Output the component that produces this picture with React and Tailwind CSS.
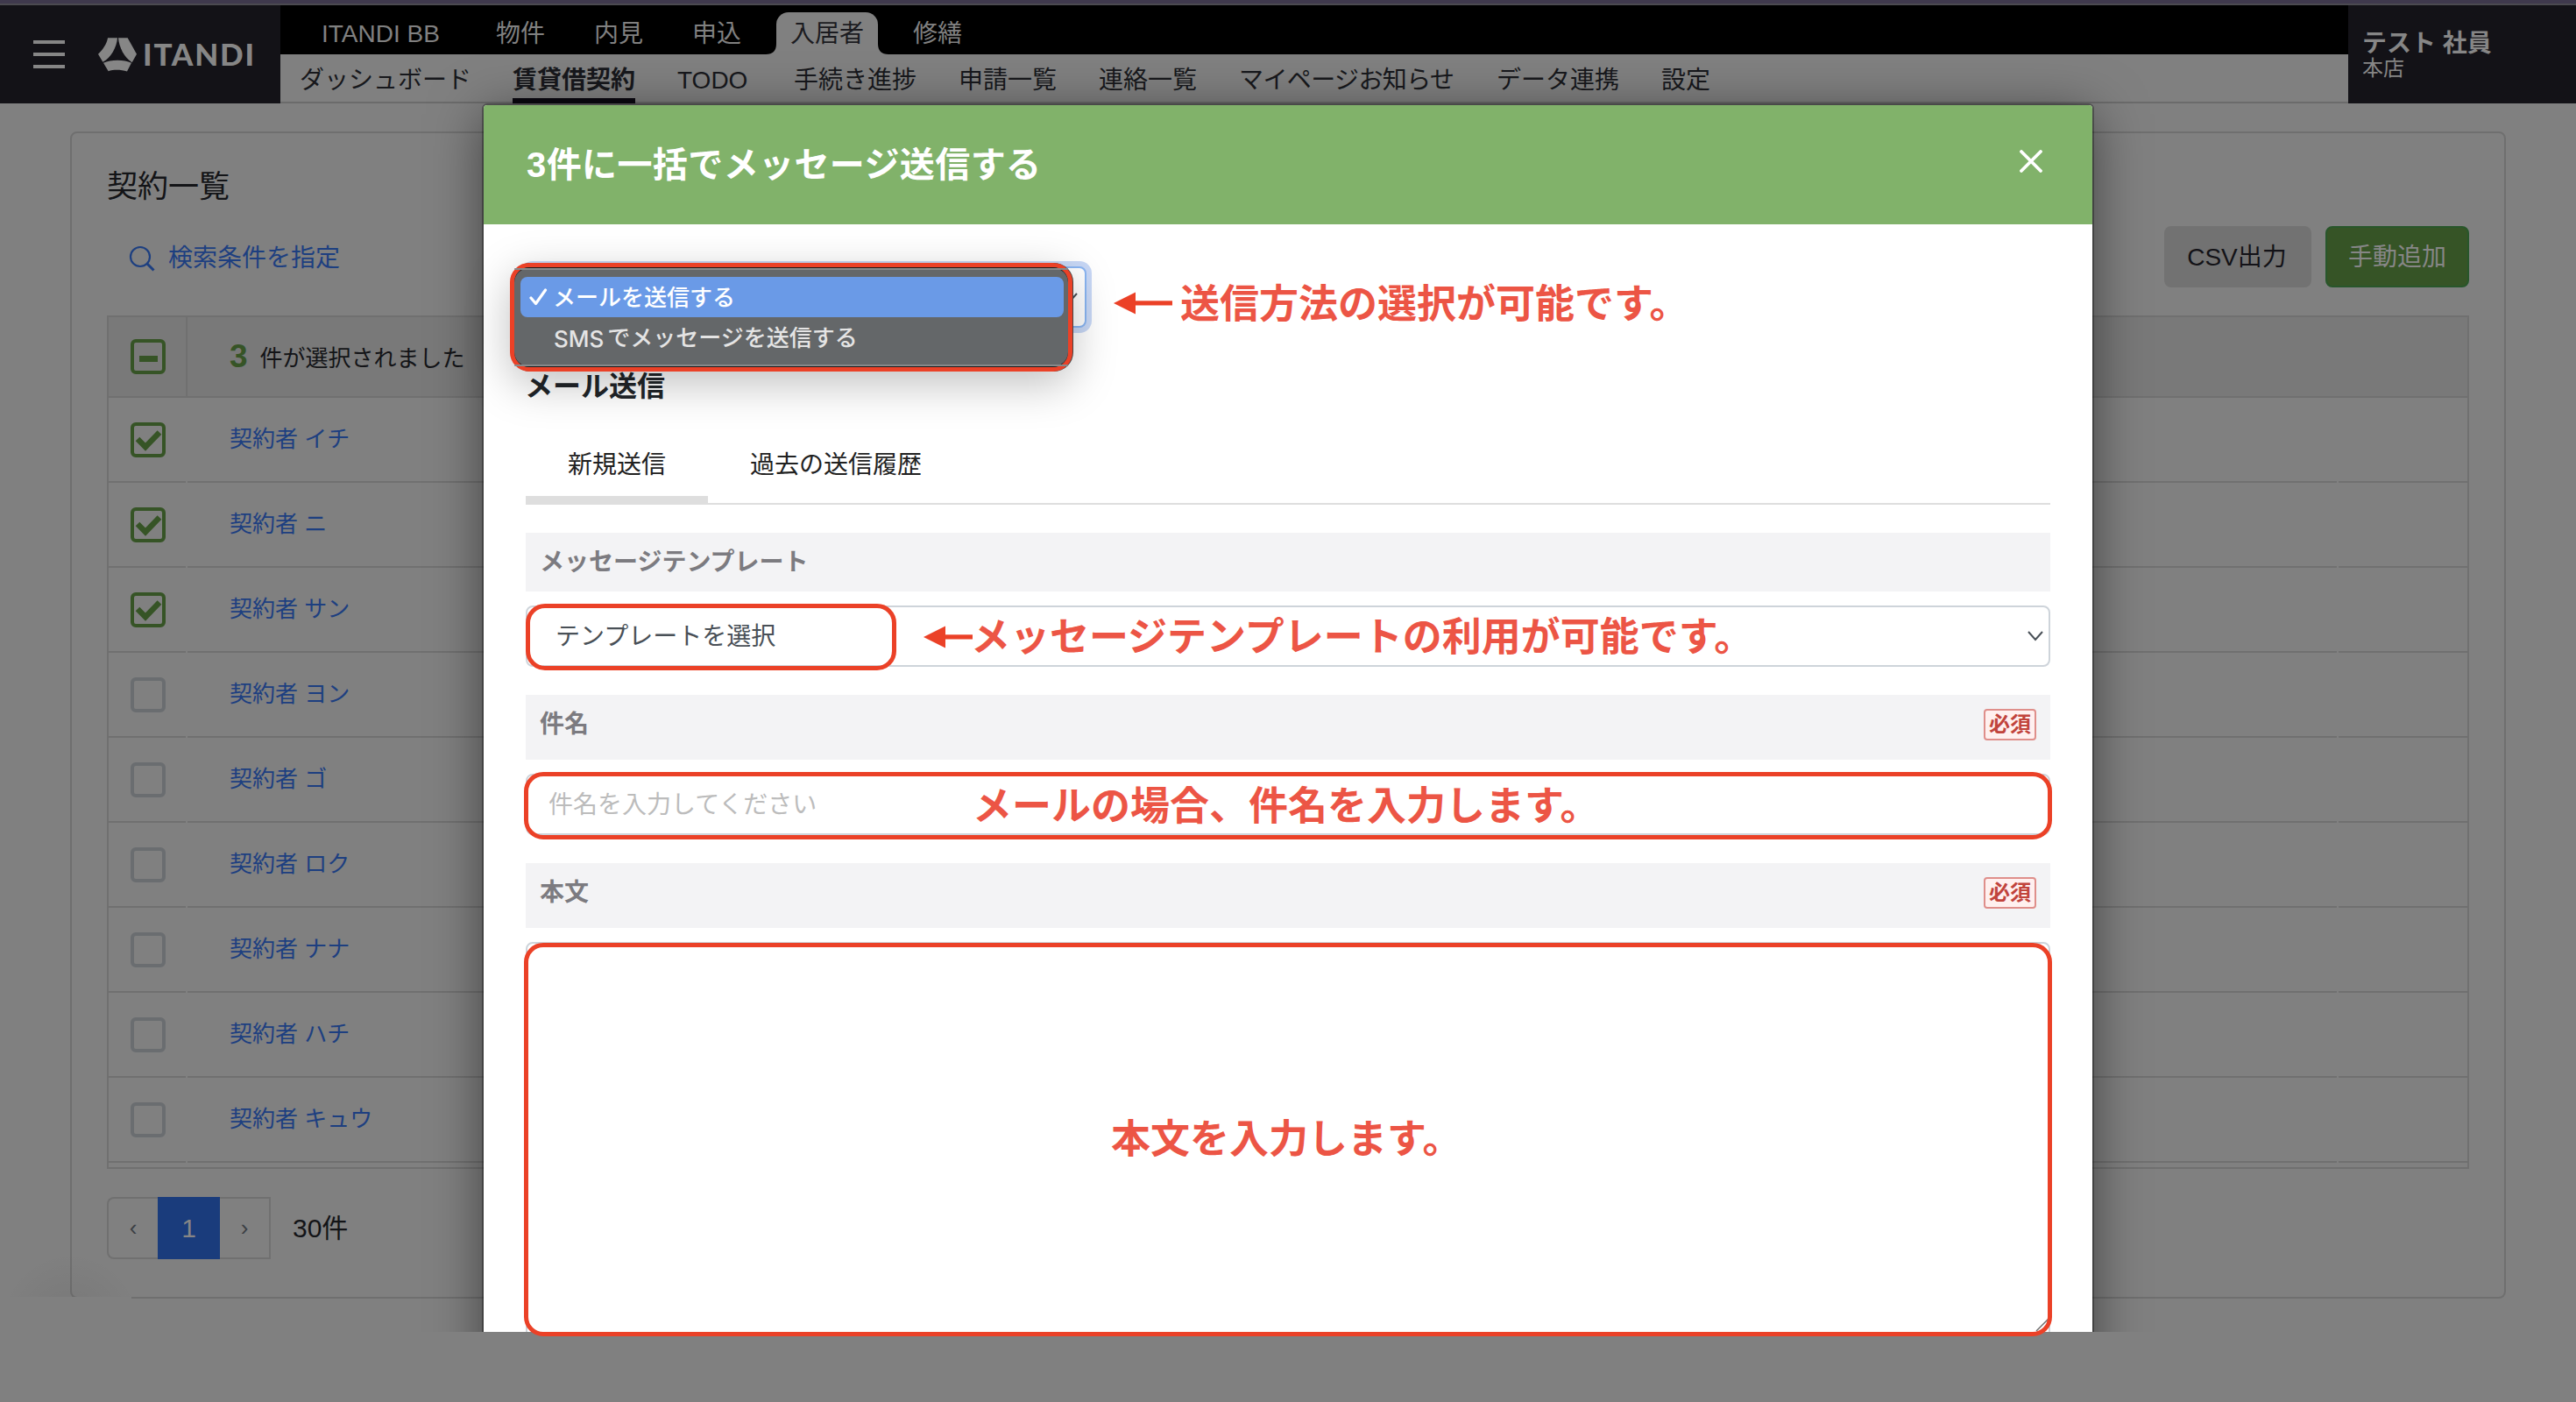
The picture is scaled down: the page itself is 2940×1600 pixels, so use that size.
import React from "react";

const SANS = "font-['Liberation_Sans','Noto_Sans_CJK_JP',sans-serif]";

const services = [
  { label: "ITANDI BB", width: "w-[144px] pl-px" },
  { label: "物件", width: "w-14" },
  { label: "内見", width: "w-14" },
  { label: "申込", width: "w-14" },
  { label: "入居者", width: "w-[84px]", active: true },
  { label: "修繕", width: "w-14" },
];

const sections = [
  { label: "ダッシュボード", width: "w-[196px]" },
  { label: "賃貸借契約", width: "w-[140px] -ml-px mr-px", active: true },
  { label: "TODO", width: "w-[84px] -ml-px mr-px" },
  { label: "手続き進捗", width: "w-[140px]" },
  { label: "申請一覧", width: "w-[112px]" },
  { label: "連絡一覧", width: "w-[112px]" },
  { label: "マイページお知らせ", width: "w-[246px] tracking-[-0.6px]" },
  { label: "データ連携", width: "w-[140px]" },
  { label: "設定", width: "w-14" },
];

const contracts = [
  { name: "契約者 イチ", checked: true },
  { name: "契約者 ニ", checked: true },
  { name: "契約者 サン", checked: true },
  { name: "契約者 ヨン", checked: false },
  { name: "契約者 ゴ", checked: false },
  { name: "契約者 ロク", checked: false },
  { name: "契約者 ナナ", checked: false },
  { name: "契約者 ハチ", checked: false },
  { name: "契約者 キュウ", checked: false },
];

function Logo() {
  return (
    <svg className="h-14 w-[196px] overflow-visible" viewBox="0 -8 196 56" fill="#868686">
      <g transform="translate(0 -0.5) scale(0.33333) translate(-336 -126)">
        <path d="M369 128H402C400 160 380 196 352 211L336 184C352 168 366 148 369 128Z" />
        <path d="M405 128H437L468 184L452 212C425 195 408 160 405 128Z" />
        <path d="M354 214C380 202 425 202 450 214L435 243C415 237 390 236 371 242Z" />
      </g>
      <text
        x="51"
        y="32"
        textLength="127"
        lengthAdjust="spacing"
        className="font-['Lato',sans-serif] text-[35px] font-black"
      >
        ITANDI
      </text>
    </svg>
  );
}

function Header() {
  return (
    <header className="flex h-28 w-full">
      <div className="flex w-80 items-center bg-[#131217]">
        <div className="ml-[38px] flex w-9 shrink-0 flex-col gap-2.5">
          <div className="h-1 bg-[#868686]" />
          <div className="h-1 bg-[#868686]" />
          <div className="h-1 bg-[#868686]" />
        </div>
        <div className="ml-[38px] mt-0.5 shrink-0">
          <Logo />
        </div>
      </div>
      <div className="flex w-[2360px] flex-col">
        <nav className="flex h-14 items-end gap-14 bg-black pl-[46px] text-[28px] text-[#808080]">
          {services.map((s) =>
            s.active ? (
              <div
                key={s.label}
                className={`relative -mx-4 flex h-12 box-content items-center justify-center rounded-t-[14px] bg-[#808080] px-4 text-[#1b1b20] ${s.width}`}
              >
                <span className="mt-0.5 whitespace-nowrap">{s.label}</span>
                <svg className="absolute bottom-0 -left-3 size-3" viewBox="0 0 12 12" fill="#808080">
                  <path d="M12 0V12H0C8 12 12 8 12 0Z" />
                </svg>
                <svg className="absolute bottom-0 -right-3 size-3" viewBox="0 0 12 12" fill="#808080">
                  <path d="M0 0V12H12C4 12 0 8 0 0Z" />
                </svg>
              </div>
            ) : (
              <div key={s.label} className={`flex h-12 items-center ${s.width}`}>
                <span className="mt-0.5 whitespace-nowrap">{s.label}</span>
              </div>
            )
          )}
        </nav>
        <nav className="flex h-14 gap-12 border-b-2 border-[#6b6b6b] bg-[#808080] pl-[22px] text-[28px] text-[#17181c]">
          {sections.map((s) => (
            <div key={s.label} className={`relative flex h-14 items-center whitespace-nowrap ${s.width}`}>
              <span className={s.active ? "mt-[3px] font-bold" : "mt-[3px]"}>{s.label}</span>
              {s.active && <div className="absolute inset-x-0 bottom-0 h-1.5 bg-[#0a0810]" />}
            </div>
          ))}
        </nav>
      </div>
      <div className="flex flex-1 flex-col bg-[#131217] pl-4 pt-[27px] text-[#868686]">
        <div className="text-[28px] font-bold leading-[34px]">テスト 社員</div>
        <div className="-mt-px text-2xl leading-6">本店</div>
      </div>
    </header>
  );
}

function Checkbox({ state }) {
  return (
    <div
      className={`flex size-10 items-center justify-center rounded-md border-4 ${
        state === "off" ? "border-[#6a6d70]" : "border-[#365426]"
      }`}
    >
      {state === "on" && (
        <svg className="size-8 shrink-0" viewBox="0 0 32 32" fill="none" stroke="#365426" strokeWidth="6.5">
          <path d="M4 15L13 24L29 7.5" />
        </svg>
      )}
      {state === "mixed" && <div className="mt-1 h-[7px] w-[21px] bg-[#365426]" />}
    </div>
  );
}

function ContractList() {
  return (
    <main className="ml-20 mt-8 h-[1332px] w-[2780px] rounded-lg border-2 border-[#6f6f6f] px-10 pt-9">
      <h1 className="h-[50px] text-[35px] leading-[50px] text-[#131417]">契約一覧</h1>
      <div className="mt-5 flex h-[70px] items-center">
        <svg className="ml-[25px] mt-1 size-[30px]" viewBox="0 0 30 30" fill="none" stroke="#1d3f80" strokeWidth="2.2">
          <circle cx="13" cy="13" r="11" />
          <path d="M21 21L28.5 28.5" strokeWidth="3" />
        </svg>
        <span className="ml-[15px] mt-[3px] text-[28px] text-[#1d3f80]">検索条件を指定</span>
        <div className="ml-auto flex h-[70px] gap-4">
          <div className="flex w-[168px] items-center justify-center rounded-lg bg-[#727272] pr-0.5 pt-0.5 text-[28px] text-[#131217]">
            CSV出力
          </div>
          <div className="flex w-[164px] items-center justify-center rounded-lg border-2 border-[#28562b] bg-[#365426] pt-0.5 text-[28px] text-[#868686]">
            手動追加
          </div>
        </div>
      </div>
      <div className="mt-8 h-[974px] w-[2696px] border-2 border-[#707070]">
        <div className="flex h-[92px] border-b-2 border-[#707070] bg-[#797979]">
          <div className="flex w-[90px] items-center border-r-2 border-[#707070] pl-[25px]">
            <Checkbox state="mixed" />
          </div>
          <div className="flex items-center pl-12 text-[26px] text-[#131417]">
            <span className="mr-3.5 text-[37px] font-bold text-[#365426]">3</span>
            <span className="mt-1">件が選択されました</span>
          </div>
        </div>
        {contracts.map((c) => (
          <div key={c.name} className="flex h-[97px] gap-0.5">
            <div className="flex w-[88px] items-center border-b-2 border-[#707070] pl-[25px]">
              <Checkbox state={c.checked ? "on" : "off"} />
            </div>
            <div className="flex w-[2453px] items-center border-b-2 border-[#707070] pl-12 text-[26px] text-[#1d3f80]">
              {c.name}
            </div>
            <div className="flex-1 border-b-2 border-[#707070]" />
          </div>
        ))}
      </div>
      <div className="mt-8 flex h-[71px] items-center">
        <div className="flex h-full w-[58px] items-center justify-center rounded-l-lg border-2 border-r-0 border-[#707070] text-[26px] text-[#3b3f44]">
          ‹
        </div>
        <div className="flex h-full w-[71px] items-center justify-center bg-[#1a3c7c] text-[30px] text-[#868686]">1</div>
        <div className="flex h-full w-[58px] items-center justify-center border-2 border-l-0 border-[#707070] text-[26px] text-[#3b3f44]">
          ›
        </div>
        <span className="ml-[25px] text-[30px] text-[#131417]">30件</span>
      </div>
    </main>
  );
}

function Arrow({ className, length }) {
  return (
    <svg className={`absolute h-[26px] w-[68px] ${className}`} viewBox="0 0 68 26" fill="#eb4127">
      <path d="M0 13L25 0.5V25.5Z" />
      <rect x="24" y="10.3" width={length - 24} height="5.2" />
    </svg>
  );
}

function Note({ className, children }) {
  return (
    <div
      className={`absolute h-[60px] whitespace-nowrap font-['Noto_Sans_CJK_JP',sans-serif] text-[45px] font-bold leading-[60px] text-[#ec5545] ${className}`}
    >
      {children}
    </div>
  );
}

function FieldLabel({ className, required, children }) {
  return (
    <div className={`flex items-center justify-between bg-[#f3f3f5] pl-4 pr-4 ${className}`}>
      <span className={`text-[28px] font-bold text-[#7c7b80] ${required ? "-mt-1.5" : ""}`}>{children}</span>
      {required && (
        <span className="-mt-1.5 flex h-9 w-[60px] items-center justify-center rounded-[4px] border-2 border-[#df8f8b] bg-[#fff0ef] text-2xl font-bold text-[#c1443c]">
          必須
        </span>
      )}
    </div>
  );
}

function MethodPicker() {
  return (
    <div className="relative mt-12 h-[70px] w-[640px] rounded-lg border-2 border-[#8ab6f3] bg-white shadow-[0_0_0_6px_#c8d8f6]">
      <svg className="absolute right-2 top-7 h-3 w-[18px]" viewBox="0 0 18 12" fill="none" stroke="#495057" strokeWidth="2">
        <path d="M1 1L9 10L17 1" />
      </svg>
      <div className="absolute -left-5 -top-1.5 h-[124px] w-[642px] rounded-[22px] border-[5px] border-[#eb4127] bg-[#646769] shadow-[1px_0_0_#444,0_14px_50px_rgba(0,0,0,0.25)]">
        <div className="flex h-full flex-col rounded-[17px] border-y border-[#1c1c1c] pl-[7px] pr-[5px]">
          <div className="-ml-[7px] -mr-[5px] mb-2 h-0.5 shrink-0 rounded-full bg-[#87898a]" />
          <div className="flex h-[46px] shrink-0 items-center rounded-lg bg-[#6a9ae7] text-[26px] font-medium text-white">
            <svg className="ml-2.5 h-5 w-[21px]" viewBox="0 0 21 20" fill="none" stroke="#fff" strokeWidth="3.2" strokeLinecap="round" strokeLinejoin="round">
              <path d="M2 11L7.5 17.5L18.5 2" />
            </svg>
            <span className="ml-1.5 mt-[3px]">メールを送信する</span>
          </div>
          <div className="flex h-[46px] shrink-0 items-center pl-[38px] pt-0.5 text-[26px] font-medium text-[#e4e4e4]">
            <span className="mr-1 font-['Inter',sans-serif]">SMS</span>
            <span>でメッセージを送信する</span>
          </div>
          <div className="-ml-[7px] -mr-[5px] mt-auto h-0.5 shrink-0 rounded-full bg-[#87898a]" />
        </div>
      </div>
      <Arrow className="left-[669px] top-[27px]" length={67} />
      <Note className="left-[745px] top-[8px]">送信方法の選択が可能です。</Note>
    </div>
  );
}

function Modal() {
  return (
    <div className="absolute left-0 top-0 h-[1520px] w-full overflow-hidden">
      <section className="ml-[552px] mt-[120px] h-[1460px] w-[1836px] rounded-t-sm bg-white shadow-[0_0_0_2px_rgba(0,0,0,0.3),0_10px_60px_rgba(0,0,0,0.5)]">
        <div className="flex h-[136px] items-center justify-between rounded-t-sm bg-[#81b26a] pl-[49px] pr-[57px]">
          <h2 className="text-[40px] font-bold tracking-[0.4px] text-white">3件に一括でメッセージ送信する</h2>
          <svg className="-mt-2 size-[26px]" viewBox="0 0 26 26" fill="none" stroke="#fff" strokeWidth="3.8" strokeLinecap="round">
            <path d="M2 2L24 24M24 2L2 24" />
          </svg>
        </div>
        <div className="flex flex-col px-12">
          <MethodPicker />
          <h3 className="-ml-px mt-[42px] h-12 text-[32px] font-bold leading-[50px] text-[#212529]">メール送信</h3>
          <div className="mt-7 flex h-[84px] border-b-2 border-[#dedede] text-[28px] text-[#212121]">
            <div className="flex h-[84px] w-52 justify-center border-b-[10px] border-[#dedede] leading-[78px]">新規送信</div>
            <div className="pl-12 leading-[78px]">過去の送信履歴</div>
          </div>
          <FieldLabel className="mt-8 h-[67px]">メッセージテンプレート</FieldLabel>
          <div className="relative mt-4 flex h-[70px] items-center rounded-lg border-2 border-[#ced4da] pl-8 pr-1.5 text-[28px] text-[#495057]">
            <span className="mt-0.5">テンプレートを選択</span>
            <svg className="ml-auto h-3 w-[18px]" viewBox="0 0 18 12" fill="none" stroke="#495057" strokeWidth="2">
              <path d="M1 1L9 10L17 1" />
            </svg>
            <div className="absolute -left-0.5 -top-1 h-[76px] w-[423px] rounded-[22px] border-[5px] border-[#eb4127]" />
            <Arrow className="left-[452px] top-[21px]" length={56} />
            <Note className="left-[506px] top-px">メッセージテンプレートの利用が可能です。</Note>
          </div>
          <FieldLabel className="mt-8 h-[74px]" required>件名</FieldLabel>
          <div className="relative mt-4 flex h-[70px] items-center rounded-lg border-2 border-[#ced4da] pl-6 text-[28px] text-[#bcbcbc]">
            <span className="mt-0.5">件名を入力してください</span>
            <div className="absolute -left-1 -top-1 h-[77px] w-[1744px] rounded-[22px] border-[5px] border-[#eb4127]" />
            <Note className="left-[508px] top-[2px]">メールの場合、件名を入力します。</Note>
          </div>
          <FieldLabel className="mt-8 h-[74px]" required>本文</FieldLabel>
          <div className="relative mt-4 h-[460px] rounded-lg border-2 border-[#ced4da]">
            <svg className="absolute left-[1721px] top-[427px] h-4 w-4" viewBox="0 0 16 16" fill="none" stroke="#6b6b6b" strokeWidth="1.5">
              <path d="M1 15L15 1" />
            </svg>
          </div>
        </div>
      </section>
    </div>
  );
}

export default function App() {
  return (
    <div className={`relative h-[1600px] w-[2940px] overflow-hidden bg-[#808080] ${SANS}`}>
      <div className="h-1 bg-[#3f394d]" />
      <div className="h-0.5 bg-[#4b4a50]" />
      <Header />
      <ContractList />
      <div className="absolute left-0 top-[1400px] h-[200px] w-[190px] overflow-hidden">
        <div className="h-20 w-full bg-[radial-gradient(circle_at_80px_110px,rgba(0,0,0,0.05)_20px,transparent_80px)]" />
        <div className="h-[120px] w-[150px] bg-[#808080]" />
      </div>
      <Modal />
      <div className="absolute left-[598px] top-[1076px] h-[449px] w-[1744px] rounded-[22px] border-[5px] border-[#eb4127]">
        <Note className="left-[665px] top-[186px]">本文を入力します。</Note>
      </div>
    </div>
  );
}
